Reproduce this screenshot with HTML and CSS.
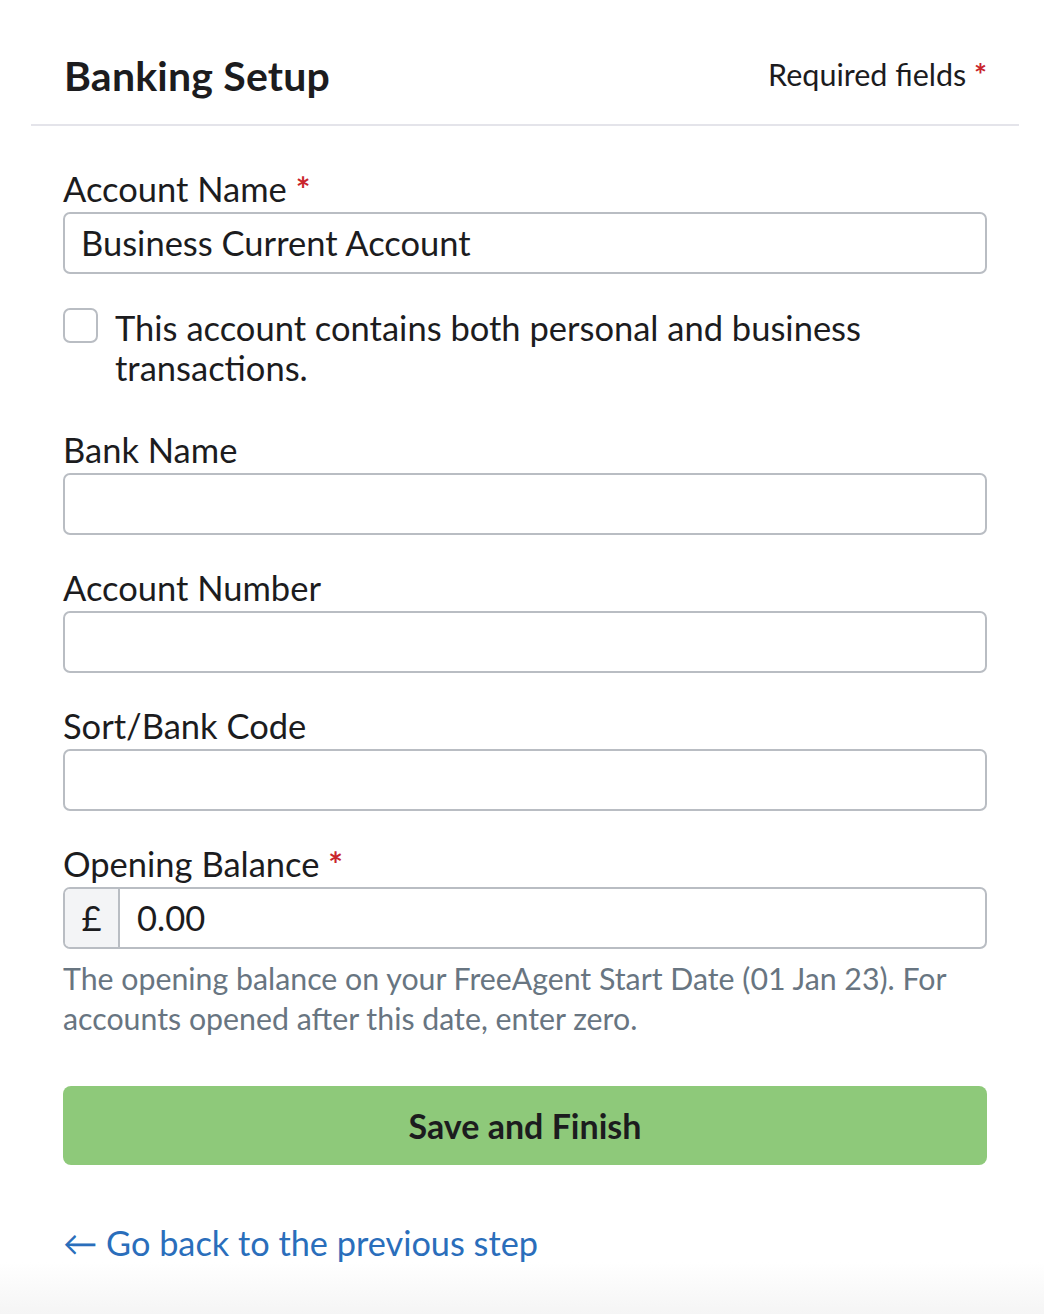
FILE: index.html
```html
<!DOCTYPE html>
<html lang="en">
<head>
<meta charset="utf-8">
<title>Banking Setup</title>
<link rel="stylesheet" href="styles.css">
</head>
<body>
<div class="page">
  <header class="header">
    <h1 class="title">Banking Setup</h1>
    <div class="required-note">Required fields <span class="req">*</span></div>
  </header>
  <form class="form">
    <div class="field">
      <label class="label">Account Name <span class="req">*</span></label>
      <div class="input">Business Current Account</div>
    </div>
    <div class="check-row">
      <span class="checkbox"></span>
      <span class="check-text">This account contains both personal and business transactions.</span>
    </div>
    <div class="field">
      <label class="label">Bank Name</label>
      <div class="input"></div>
    </div>
    <div class="field">
      <label class="label">Account Number</label>
      <div class="input"></div>
    </div>
    <div class="field">
      <label class="label">Sort/Bank Code</label>
      <div class="input"></div>
    </div>
    <div class="field field-last">
      <label class="label">Opening Balance <span class="req">*</span></label>
      <div class="input-group">
        <span class="prefix">£</span>
        <span class="group-value">0.00</span>
      </div>
      <p class="help">The opening balance on your FreeAgent Start Date (01 Jan 23). For accounts opened after this date, enter zero.</p>
    </div>
    <div class="button">Save and Finish</div>
    <a class="back" href="#">← Go back to the previous step</a>
  </form>
</div>
</body>
</html>
```
FILE: styles.css
```css
html, body {
  margin: 0;
  padding: 0;
}
body {
  width: 1044px;
  height: 1314px;
  overflow: hidden;
  font-family: "Lato", "Liberation Sans", sans-serif;
  color: #1c1c1e;
  background: linear-gradient(to bottom, #ffffff 0, #ffffff 1262px, #f5f5f5 1314px);
}
.page {
  padding: 0 25px 0 31px;
}
.header {
  display: flex;
  justify-content: space-between;
  align-items: center;
  padding: 52px 32px 24px 33px;
  border-bottom: 2px solid #e4e4ea;
}
.title {
  margin: 0;
  font-size: 41px;
  line-height: 48px;
  font-weight: 700;
  letter-spacing: 0.2px;
}
.required-note {
  font-size: 30.5px;
  line-height: 48px;
  margin-top: -4px;
}
.req {
  color: #c9252c;
  font-weight: 700;
}
.form {
  padding: 43px 32px 0 32px;
  display: flex;
  flex-direction: column;
}
.field {
  display: flex;
  flex-direction: column;
  margin-bottom: 33px;
}
.field-last {
  margin-bottom: 48px;
}
.label {
  font-size: 34.5px;
  line-height: 40px;
  margin-bottom: 3px;
}
.input {
  height: 58px;
  border: 2px solid #b9bdc3;
  border-radius: 7px;
  padding: 0 16px;
  font-size: 34.5px;
  line-height: 58px;
}
.check-row {
  display: flex;
  align-items: flex-start;
  gap: 17px;
  margin-top: 1px;
  margin-bottom: 42px;
}
.checkbox {
  flex: none;
  width: 31px;
  height: 31px;
  border: 2px solid #b9bdc3;
  border-radius: 7px;
  background: #fff;
}
.check-text {
  font-size: 34.5px;
  line-height: 40px;
  max-width: 800px;
}
.input-group {
  display: flex;
  height: 58px;
  border: 2px solid #b9bdc3;
  border-radius: 7px;
  overflow: hidden;
}
.prefix {
  width: 53px;
  background: #f3f4f6;
  border-right: 2px solid #b9bdc3;
  font-size: 34.5px;
  line-height: 58px;
  text-align: center;
  flex: none;
}
.group-value {
  padding-left: 17px;
  font-size: 34.5px;
  line-height: 58px;
}
.help {
  margin: 9px 0 0;
  font-size: 30.3px;
  line-height: 40px;
  color: #687581;
}
.button {
  height: 79px;
  background: #8ec97a;
  border-radius: 8px;
  font-size: 34px;
  font-weight: 700;
  line-height: 79px;
  text-align: center;
  color: #1c1c1e;
}
.back {
  margin-top: 58px;
  font-size: 34.3px;
  line-height: 40px;
  color: #2a6ebb;
  text-decoration: none;
  align-self: flex-start;
}
```
